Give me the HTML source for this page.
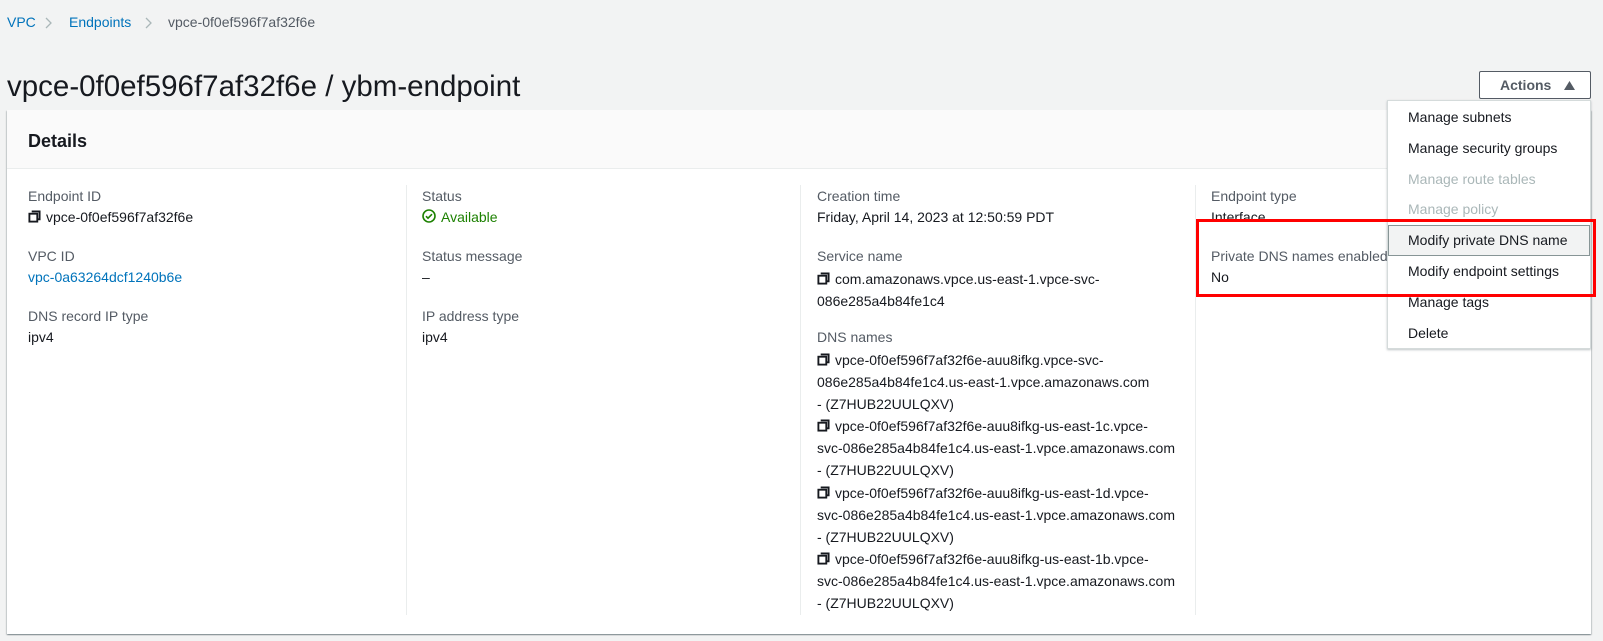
<!DOCTYPE html>
<html><head><meta charset="utf-8"><style>
*{margin:0;padding:0;box-sizing:border-box}
body{width:1603px;height:641px;background:#f2f3f3;font-family:"Liberation Sans",sans-serif;font-size:14px;color:#16191f;position:relative;overflow:hidden}
.a{position:absolute;white-space:nowrap}
.lbl{color:#545b64}
.lnk{color:#0073bb}
.bc{top:14px;font-size:14px}
.panel{position:absolute;left:7px;top:110px;width:1584px;height:524px;background:#fff;box-shadow:0 1px 1px rgba(0,28,36,.3),1px 1px 1px rgba(0,28,36,.15),-1px 1px 1px rgba(0,28,36,.15)}
.hdr{position:absolute;left:0;top:0;width:100%;height:59px;border-bottom:1px solid #eaeded;background:#fafafa}
.div{position:absolute;top:75px;width:1px;height:430px;background:#eaeded}
.cp{display:inline-block;vertical-align:-1px;margin-right:5px}
.menu{position:absolute;left:1387px;top:100px;width:204px;height:249px;background:#fff;border:1px solid #d5dbdb;box-shadow:0 1px 2px rgba(0,28,36,.25)}
.mi{position:absolute;left:20px;font-size:14px}
</style></head><body>
<svg width="0" height="0" style="position:absolute"><defs><symbol id="c" viewBox="0 0 14 14"><path d="M4 1.5h8.5v8.5H10" fill="none" stroke="#16191f" stroke-width="2"/><rect x="1.5" y="4" width="8.5" height="8.5" fill="none" stroke="#16191f" stroke-width="2"/></symbol></defs></svg>
<div class="a bc lnk" style="left:7px">VPC</div>
<svg class="a" style="left:45px;top:17px" width="8" height="12"><path d="M1 1l5 5-5 5" fill="none" stroke="#aab7b8" stroke-width="1.3"/></svg>
<div class="a bc lnk" style="left:69px">Endpoints</div>
<svg class="a" style="left:145px;top:17px" width="8" height="12"><path d="M1 1l5 5-5 5" fill="none" stroke="#aab7b8" stroke-width="1.3"/></svg>
<div class="a bc" style="left:168px;color:#545b64">vpce-0f0ef596f7af32f6e</div>
<div class="a" style="left:7px;top:70px;font-size:29.5px">vpce-0f0ef596f7af32f6e / ybm-endpoint</div>
<div class="a" style="left:1479px;top:71px;width:112px;height:28px;border:1px solid #545b64;border-radius:2px;background:#fff"><span class="a" style="left:20px;top:5px;font-weight:bold;color:#545b64">Actions</span><svg class="a" style="left:84px;top:9px" width="11" height="9"><path d="M0 9L5.5 0L11 9Z" fill="#545b64"/></svg></div>
<div class="panel">
<div class="hdr"><div class="a" style="left:21px;top:21px;font-size:18px;font-weight:bold">Details</div></div>
<div class="div" style="left:399px"></div><div class="div" style="left:793px"></div><div class="div" style="left:1188px"></div>
</div>
<!-- col1 -->
<div class="a lbl" style="left:28px;top:188px">Endpoint ID</div>
<div class="a" style="left:28px;top:209px"><svg class="cp" width="13" height="13"><use href="#c"/></svg>vpce-0f0ef596f7af32f6e</div>
<div class="a lbl" style="left:28px;top:248px">VPC ID</div>
<div class="a lnk" style="left:28px;top:269px">vpc-0a63264dcf1240b6e</div>
<div class="a lbl" style="left:28px;top:308px">DNS record IP type</div>
<div class="a" style="left:28px;top:329px">ipv4</div>
<!-- col2 -->
<div class="a lbl" style="left:422px;top:188px">Status</div>
<div class="a" style="left:422px;top:209px;color:#1d8102"><svg class="cp" width="14" height="14" viewBox="0 0 14 14"><circle cx="7" cy="7" r="6" fill="none" stroke="#1d8102" stroke-width="1.6"/><path d="M4 7.2l2 2 4-4" fill="none" stroke="#1d8102" stroke-width="1.6"/></svg>Available</div>
<div class="a lbl" style="left:422px;top:248px">Status message</div>
<div class="a" style="left:422px;top:269px">–</div>
<div class="a lbl" style="left:422px;top:308px">IP address type</div>
<div class="a" style="left:422px;top:329px">ipv4</div>
<!-- col3 -->
<div class="a lbl" style="left:817px;top:188px">Creation time</div>
<div class="a" style="left:817px;top:209px">Friday, April 14, 2023 at 12:50:59 PDT</div>
<div class="a lbl" style="left:817px;top:248px">Service name</div>
<div class="a" style="left:817px;top:268px;line-height:22px;white-space:normal;width:370px"><svg class="cp" width="13" height="13"><use href="#c"/></svg>com.amazonaws.vpce.us-east-1.vpce-svc-<br>086e285a4b84fe1c4</div>
<div class="a lbl" style="left:817px;top:329px">DNS names</div>
<div class="a" style="left:817px;top:349px;line-height:22.1px;white-space:normal;width:370px">
<svg class="cp" width="13" height="13"><use href="#c"/></svg>vpce-0f0ef596f7af32f6e-auu8ifkg.vpce-svc-<br>086e285a4b84fe1c4.us-east-1.vpce.amazonaws.com<br>- (Z7HUB22UULQXV)<br>
<svg class="cp" width="13" height="13"><use href="#c"/></svg>vpce-0f0ef596f7af32f6e-auu8ifkg-us-east-1c.vpce-<br>svc-086e285a4b84fe1c4.us-east-1.vpce.amazonaws.com<br>- (Z7HUB22UULQXV)<br>
<svg class="cp" width="13" height="13"><use href="#c"/></svg>vpce-0f0ef596f7af32f6e-auu8ifkg-us-east-1d.vpce-<br>svc-086e285a4b84fe1c4.us-east-1.vpce.amazonaws.com<br>- (Z7HUB22UULQXV)<br>
<svg class="cp" width="13" height="13"><use href="#c"/></svg>vpce-0f0ef596f7af32f6e-auu8ifkg-us-east-1b.vpce-<br>svc-086e285a4b84fe1c4.us-east-1.vpce.amazonaws.com<br>- (Z7HUB22UULQXV)</div>
<!-- col4 -->
<div class="a lbl" style="left:1211px;top:188px">Endpoint type</div>
<div class="a" style="left:1211px;top:209px">Interface</div>
<div class="a lbl" style="left:1211px;top:248px">Private DNS names enabled</div>
<div class="a" style="left:1211px;top:269px">No</div>
<!-- menu -->
<div class="menu">
<div class="mi" style="top:8px">Manage subnets</div>
<div class="mi" style="top:39px">Manage security groups</div>
<div class="mi" style="top:70px;color:#aab7b8">Manage route tables</div>
<div class="mi" style="top:100px;color:#aab7b8">Manage policy</div>
<div class="a" style="left:0;top:124px;width:202px;height:31px;background:#f2f3f3;border:1px solid #879596"></div>
<div class="mi" style="top:131px">Modify private DNS name</div>
<div class="mi" style="top:162px">Modify endpoint settings</div>
<div class="mi" style="top:193px">Manage tags</div>
<div class="mi" style="top:224px">Delete</div>
</div>
<div class="a" style="left:1196px;top:219px;width:400px;height:78px;border:3px solid #ff0000"></div>
</body></html>
